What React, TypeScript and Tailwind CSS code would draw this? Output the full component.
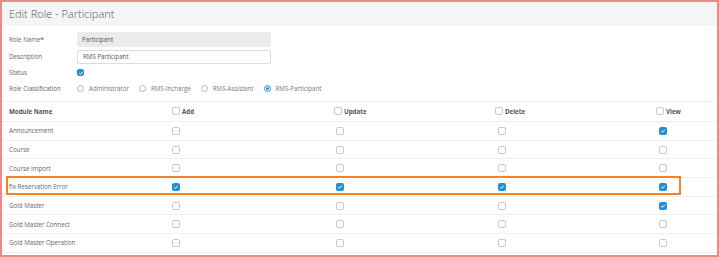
import React from "react";

type Row = { name: string; add: boolean; update: boolean; del: boolean; view: boolean; marked?: boolean };

const rows: Row[] = [
  { name: "Announcement", add: false, update: false, del: false, view: true },
  { name: "Course", add: false, update: false, del: false, view: false },
  { name: "Course Import", add: false, update: false, del: false, view: false },
  { name: "fix Reservation Error", add: true, update: true, del: true, view: true, marked: true },
  { name: "Gold Master", add: false, update: false, del: false, view: true },
  { name: "Gold Master Connect", add: false, update: false, del: false, view: false },
  { name: "Gold Master Operation", add: false, update: false, del: false, view: false },
];

function Check({ on, size = "w-2 h-2" }: { on?: boolean; size?: string }) {
  if (on) {
    return (
      <span className={`${size} rounded-[2px] bg-[#1f8fdb] flex items-center justify-center shrink-0`}>
        <svg viewBox="0 0 10 10" className="w-[6px] h-[6px]">
          <path d="M2 5.3 L4.2 7.3 L8 2.8" fill="none" stroke="#fff" strokeWidth="1.6" />
        </svg>
      </span>
    );
  }
  return <span className={`${size} rounded-[2px] border border-[#c9c9c9] bg-white shrink-0`} />;
}

function Radio({ on, label }: { on?: boolean; label: string }) {
  return (
    <div className="flex items-center">
      {on ? (
        <span className="w-[7px] h-[7px] rounded-full border-[1.5px] border-[#1f8fdb] flex items-center justify-center">
          <span className="w-[3px] h-[3px] rounded-full bg-[#1f8fdb]" />
        </span>
      ) : (
        <span className="w-[7px] h-[7px] rounded-full border border-[#b5b5b5]" />
      )}
      <span className="ml-[5px] text-[#777]">{label}</span>
    </div>
  );
}

export default function App() {
  return (
    <div
      className="w-[719px] h-[257px] border-2 border-[#f28787] bg-white overflow-hidden text-[6.2px] text-[#666]"
      style={{ fontFamily: "'Open Sans', 'Liberation Sans', sans-serif" }}
    >
      {/* header */}
      <div className="h-[24px] bg-[#f4f6f6] flex items-center pl-[7px]">
        <span className="text-[11px] text-[#555] font-light">Edit Role - Participant</span>
      </div>

      {/* form */}
      <div className="pl-[7px] pt-[6px] pb-[4px]">
        <div className="flex items-center h-[15px]">
          <span className="w-[68px]">
            Role Name<span className="text-[#d0021b]">*</span>
          </span>
          <div className="w-[194px] h-[15px] bg-[#ebebeb] rounded-[2px] flex items-center pl-[5px] text-[#555]">
            Participant
          </div>
        </div>
        <div className="flex items-center h-[14px] mt-[3px]">
          <span className="w-[68px]">Description</span>
          <div className="w-[194px] h-[14px] border border-[#dcdcdc] rounded-[2px] flex items-center pl-[5px] text-[#555]">
            RMS Participant
          </div>
        </div>
        <div className="flex items-center h-[17px]">
          <span className="w-[68px]">Status</span>
          <Check on size="w-[7px] h-[7px]" />
        </div>
        <div className="flex items-center h-[16px]">
          <span className="w-[68px]">Role Classification</span>
          <div className="flex items-center gap-[10px]">
            <Radio label="Administrator" />
            <Radio label="RMS-Incharge" />
            <Radio label="RMS-Assistant" />
            <Radio on label="RMS-Participant" />
          </div>
        </div>
      </div>

      {/* table */}
      <div className="border-t border-[#f0f0f0]">
        <div className="grid grid-cols-[170px_162px_161px_161px_1fr] h-[20px] items-center border-b border-[#eeeeee]">
          <span className="pl-[7px] font-bold text-[#555]">Module Name</span>
          {["Add", "Update", "Delete", "View"].map((h) => (
            <div key={h} className="flex items-center gap-[2px]">
              <Check />
              <span className="font-bold text-[#555]">{h}</span>
            </div>
          ))}
        </div>
        {rows.map((r) => (
          <div
            key={r.name}
            className="relative grid grid-cols-[170px_162px_161px_161px_1fr] h-[18.7px] items-center border-b border-[#f0f0f0]"
          >
            <span className="pl-[7px]">{r.name}</span>
            <div className="flex">
              <Check on={r.add} />
            </div>
            <div className="flex pl-[2px]">
              <Check on={r.update} />
            </div>
            <div className="flex pl-[3px]">
              <Check on={r.del} />
            </div>
            <div className="flex pl-[3px]">
              <Check on={r.view} />
            </div>
            {r.marked && (
              <div className="absolute left-[4px] top-[-2px] w-[675px] h-[19px] border-2 border-[#f5822a] pointer-events-none" />
            )}
          </div>
        ))}
      </div>
    </div>
  );
}
